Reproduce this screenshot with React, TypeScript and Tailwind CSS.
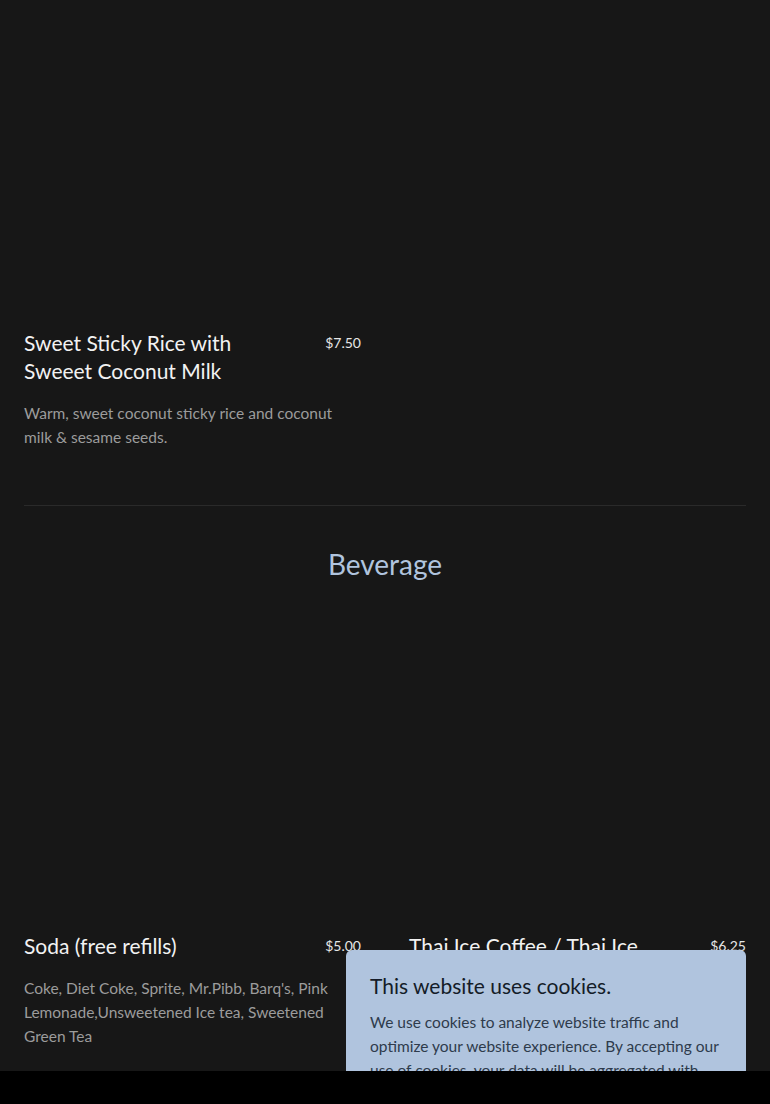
import React from 'react';

type Item = {
  name: string;
  price: string;
  description: string;
};

const desserts: Item[] = [
  {
    name: 'Sweet Sticky Rice with Sweeet Coconut Milk',
    price: '$7.50',
    description: 'Warm, sweet coconut sticky rice and coconut milk & sesame seeds.',
  },
];

const beverages: Item[] = [
  {
    name: 'Soda (free refills)',
    price: '$5.00',
    description:
      "Coke, Diet Coke, Sprite, Mr.Pibb, Barq's, Pink Lemonade,Unsweetened Ice tea, Sweetened Green Tea",
  },
  {
    name: 'Thai Ice Coffee / Thai Ice Tea',
    price: '$6.25',
    description: 'Sweet Thai iced coffee or Thai iced tea with cream.',
  },
];

const MenuItem = ({ item }: { item: Item }) => (
  <div className="flex flex-col">
    <div className="h-[300px]" />
    <div className="mt-4 flex items-start justify-between">
      <h3 className="w-3/4 text-[21px] leading-7 text-[#f2f2f2]">{item.name}</h3>
      <span className="text-[14px] leading-7 text-[#e6e6e6]">{item.price}</span>
    </div>
    <p className="mt-4 text-[15.5px] leading-6 text-[#9c9c9c]">{item.description}</p>
  </div>
);

export default function App() {
  return (
    <div
      className="min-h-screen bg-[#171717] px-6"
      style={{ fontFamily: 'Lato, "Noto Sans", sans-serif' }}
    >
      <div className="grid grid-cols-2 gap-x-12 pt-[13px]">
        {desserts.map((item) => (
          <MenuItem key={item.name} item={item} />
        ))}
      </div>

      <div className="mt-14 border-t border-[#2a2a2a]" />

      <h2 className="mt-10 text-center text-[28px] leading-9 text-[#b0c4de]">Beverage</h2>

      <div className="mt-[34px] grid grid-cols-2 gap-x-12 pb-16">
        {beverages.map((item) => (
          <MenuItem key={item.name} item={item} />
        ))}
      </div>

      <div className="fixed left-[346px] top-[950px] w-[400px] rounded-md bg-[#b0c4de] px-6 pt-5 pb-6">
        <h4 className="mb-2 text-[21px] leading-8 text-[#141c28]">This website uses cookies.</h4>
        <p className="text-[15.5px] leading-6 text-[#2e3b4c]">
          We use cookies to analyze website traffic and
          <br />
          optimize your website experience. By accepting our
          <br />
          use of cookies, your data will be aggregated with
          <br />
          all other user data.
        </p>
      </div>

      <div className="fixed inset-x-0 bottom-0 h-[33px] bg-black" />
    </div>
  );
}
